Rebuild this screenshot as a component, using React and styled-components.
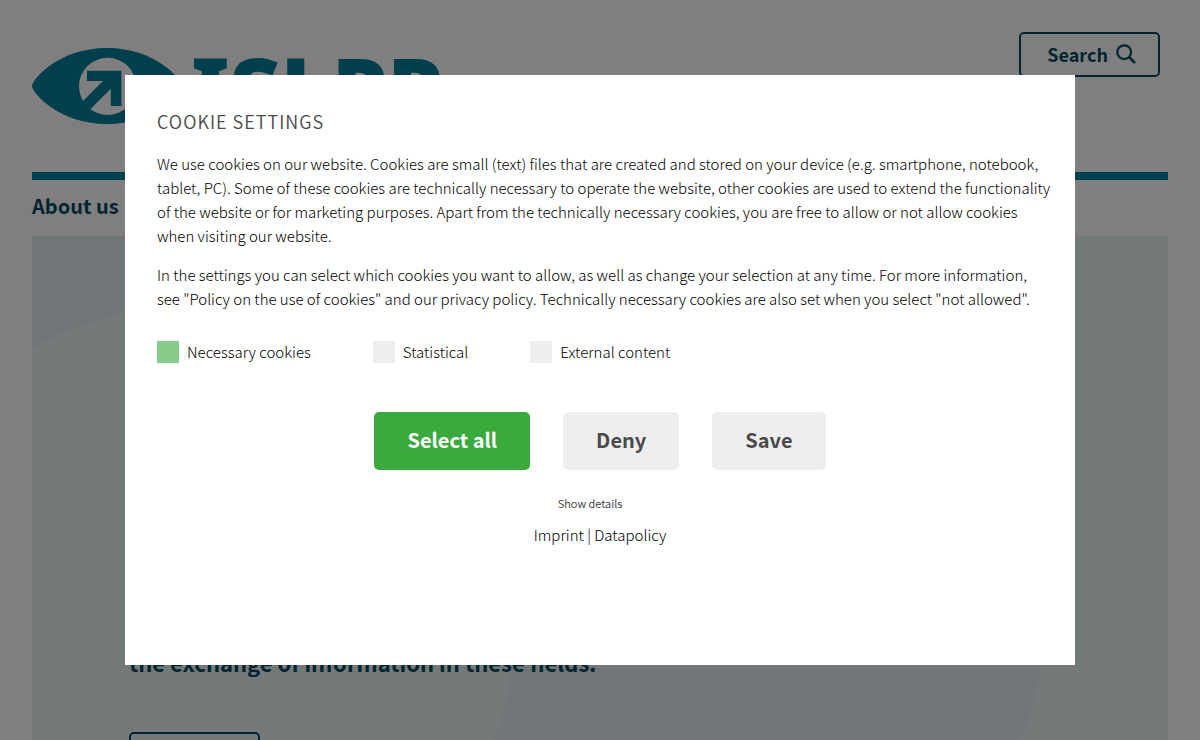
import React, { useState } from "react";
import styled, { createGlobalStyle } from "styled-components";

const GlobalStyle = createGlobalStyle`
  * {
    box-sizing: border-box;
  }
  body {
    margin: 0;
    overflow: hidden;
    background-color: #ffffff;
    color: #000000;
    font-family: "Noto Sans CJK SC", "Noto Sans", sans-serif;
    font-size: 15px;
    line-height: 24px;
  }
  h1, h2, p {
    margin: 0;
  }
`
const Page = styled.div`
  height: 100vh;
  overflow: hidden;
  padding: 0 32px;
`
const Header = styled.header`
  height: 180px;
  padding: 32px 8px 0 0;
  display: flex;
  justify-content: space-between;
  align-items: flex-start;
`
const Divider = styled.hr`
  height: 8px;
  margin: -8px 0 0;
  border: none;
  background-color: #007e96;
`
const Logo = styled.a`
  display: flex;
  align-items: flex-start;
  gap: 9px;
  margin-top: 16px;
  color: #007e96;
  text-decoration: none;
`
const LogoText = styled.span`
  font-family: "Open Sans", sans-serif;
  font-size: 88px;
  font-weight: 800;
  line-height: 80px;
`
const SlabLetter = styled.span`
  font-family: "Noto Sans", sans-serif;
  font-weight: 900;
`
const OutlineButton = styled.button`
  display: flex;
  align-items: center;
  gap: 8px;
  min-width: 131px;
  height: 45px;
  padding: 0 22px 2px 26px;
  border: 2px solid #004a62;
  border-radius: 5px;
  background: transparent;
  color: #004a62;
  font-family: inherit;
  font-size: 18px;
  font-weight: 700;
`
const Nav = styled.nav`
  height: 56px;
  display: flex;
  align-items: center;
  padding-bottom: 4px;
`
const NavLink = styled.a`
  color: #004a62;
  font-size: 20px;
  font-weight: 700;
  text-decoration: none;
`
const Hero = styled.main`
  position: relative;
  overflow: hidden;
  height: 600px;
  padding: 410px 97px 0;
  background-color: #e7f5f2;
`
const Shapes = styled.svg`
  position: absolute;
  top: 0;
  left: 0;
`
const HeroContent = styled.div`
  position: relative;
  display: flex;
  flex-direction: column;
  align-items: flex-start;
  gap: 54px;
`
const HeroText = styled.p`
  color: #004a62;
  font-size: 22px;
  font-weight: 700;
  line-height: 32px;
`
const Overlay = styled.div`
  position: fixed;
  inset: 0;
  display: flex;
  padding: 75px 125px;
  background-color: rgba(0, 0, 0, 0.5);
`
const Dialog = styled.section`
  flex: 1;
  overflow: auto;
  padding: 31px 32px;
  background-color: #ffffff;
`
const Title = styled.h1`
  margin-bottom: 15px;
  color: #4a4a4a;
  font-size: 18px;
  font-weight: 350;
  line-height: 31px;
  letter-spacing: 1px;
  text-transform: uppercase;
`
const Text = styled.p`
  margin: 0 -10px 15px 0;
  font-weight: 300;
`
const Options = styled.div`
  display: flex;
  gap: 62px;
  margin-top: 29px;
`
const Option = styled.label`
  display: flex;
  align-items: center;
  gap: 8px;
  font-weight: 300;
`
const Checkbox = styled.input`
  appearance: none;
  width: 22px;
  height: 22px;
  margin: 0;
  background-color: #eeeeee;
  &:checked {
    background-color: #3aaa3f;
  }
  &:disabled {
    background-color: #88cc8b;
  }
`
const Buttons = styled.div`
  display: flex;
  justify-content: center;
  gap: 33px;
  margin-top: 48px;
`
const Button = styled.button`
  height: 58px;
  padding: 0 33px 3px;
  border: none;
  border-radius: 5px;
  background-color: ${(props) => (props.$primary ? "#3aaa3f" : "#eeeeee")};
  color: ${(props) => (props.$primary ? "#ffffff" : "#4a4a4a")};
  font-family: inherit;
  font-size: 20px;
  font-weight: 700;
`
const Links = styled.div`
  display: flex;
  flex-direction: column;
  align-items: center;
  gap: 8px;
  margin-top: 21px;
  font-weight: 300;
`
const DetailsLink = styled.a`
  padding-right: 20px;
  color: #333333;
  font-size: 11px;
  font-weight: 350;
  text-decoration: none;
`
const FooterLink = styled.a`
  color: #000000;
  text-decoration: none;
`

const EyeLogo = () => (
  <svg width="150" height="76" viewBox="32 48 150 76" aria-hidden="true">
    <path
      fill="#007e96"
      d="M32 86C32 80 58 48 107 48C156 48 182 80 182 86C182 92 156 124 107 124C58 124 32 92 32 86Z"
    />
    <circle cx="107.6" cy="86.3" r="28.6" fill="#ffffff" />
    <path fill="#007e96" d="M87 70.8H121.4V106H110.8V88.8L90.5 109L81 103L103 81H87Z" />
  </svg>
)

const SearchIcon = () => (
  <svg width="20" height="20" viewBox="0 0 20 20" fill="none" stroke="#004a62" strokeWidth="2.2" aria-hidden="true">
    <circle cx="8.2" cy="8.2" r="6.9" />
    <path d="M13 13L19 19" strokeWidth="2.6" />
  </svg>
)

const App = () => {
  const [selected, setSelected] = useState({ statistical: false, external: false });

  const toggle = (e) => {
    const { name, checked } = e.target;
    setSelected((prev) => ({ ...prev, [name]: checked }));
  }

  return (
    <>
      <GlobalStyle />
      <Page>
        <Header>
          <Logo href="#">
            <EyeLogo />
            <LogoText><SlabLetter>I</SlabLetter>SLPP</LogoText>
          </Logo>
          <OutlineButton>
            Search
            <SearchIcon />
          </OutlineButton>
        </Header>
        <Divider />
        <Nav>
          <NavLink href="#">About us</NavLink>
        </Nav>
        <Hero>
          <Shapes width="1136" height="600" aria-hidden="true">
            <rect width="500" height="300" fill="#e1ecf0" />
            <circle cx="703" cy="384" r="310" fill="#e2ecf0" />
            <circle cx="160" cy="392" r="322" fill="#e9f5f2" />
          </Shapes>
          <HeroContent>
            <HeroText>the exchange of information in these fields.</HeroText>
            <OutlineButton aria-label="Read more" />
          </HeroContent>
        </Hero>
      </Page>
      <Overlay>
        <Dialog role="dialog" aria-modal="true" aria-labelledby="cookie-title">
          <Title id="cookie-title">Cookie settings</Title>
          <Text>
            We use cookies on our website. Cookies are small (text) files that are created and stored on your device
            (e.g. smartphone, notebook, tablet, PC). Some of these cookies are technically necessary to operate the
            website, other cookies are used to extend the functionality of the website or for marketing purposes. Apart
            from the technically necessary cookies, you are free to allow or not allow cookies when visiting our
            website.
          </Text>
          <Text>
            In the settings you can select which cookies you want to allow, as well as change your selection at any
            time. For more information, see "Policy on the use of cookies" and our privacy policy. Technically necessary
            cookies are also set when you select "not allowed".
          </Text>
          <Options>
            <Option>
              <Checkbox type="checkbox" checked disabled readOnly />
              Necessary cookies
            </Option>
            <Option>
              <Checkbox type="checkbox" name="statistical" checked={selected.statistical} onChange={toggle} />
              Statistical
            </Option>
            <Option>
              <Checkbox type="checkbox" name="external" checked={selected.external} onChange={toggle} />
              External content
            </Option>
          </Options>
          <Buttons>
            <Button $primary>Select all</Button>
            <Button>Deny</Button>
            <Button>Save</Button>
          </Buttons>
          <Links>
            <DetailsLink href="#">Show details</DetailsLink>
            <div>
              <FooterLink href="#">Imprint</FooterLink> | <FooterLink href="#">Datapolicy</FooterLink>
            </div>
          </Links>
        </Dialog>
      </Overlay>
    </>
  )
};

export default App;
